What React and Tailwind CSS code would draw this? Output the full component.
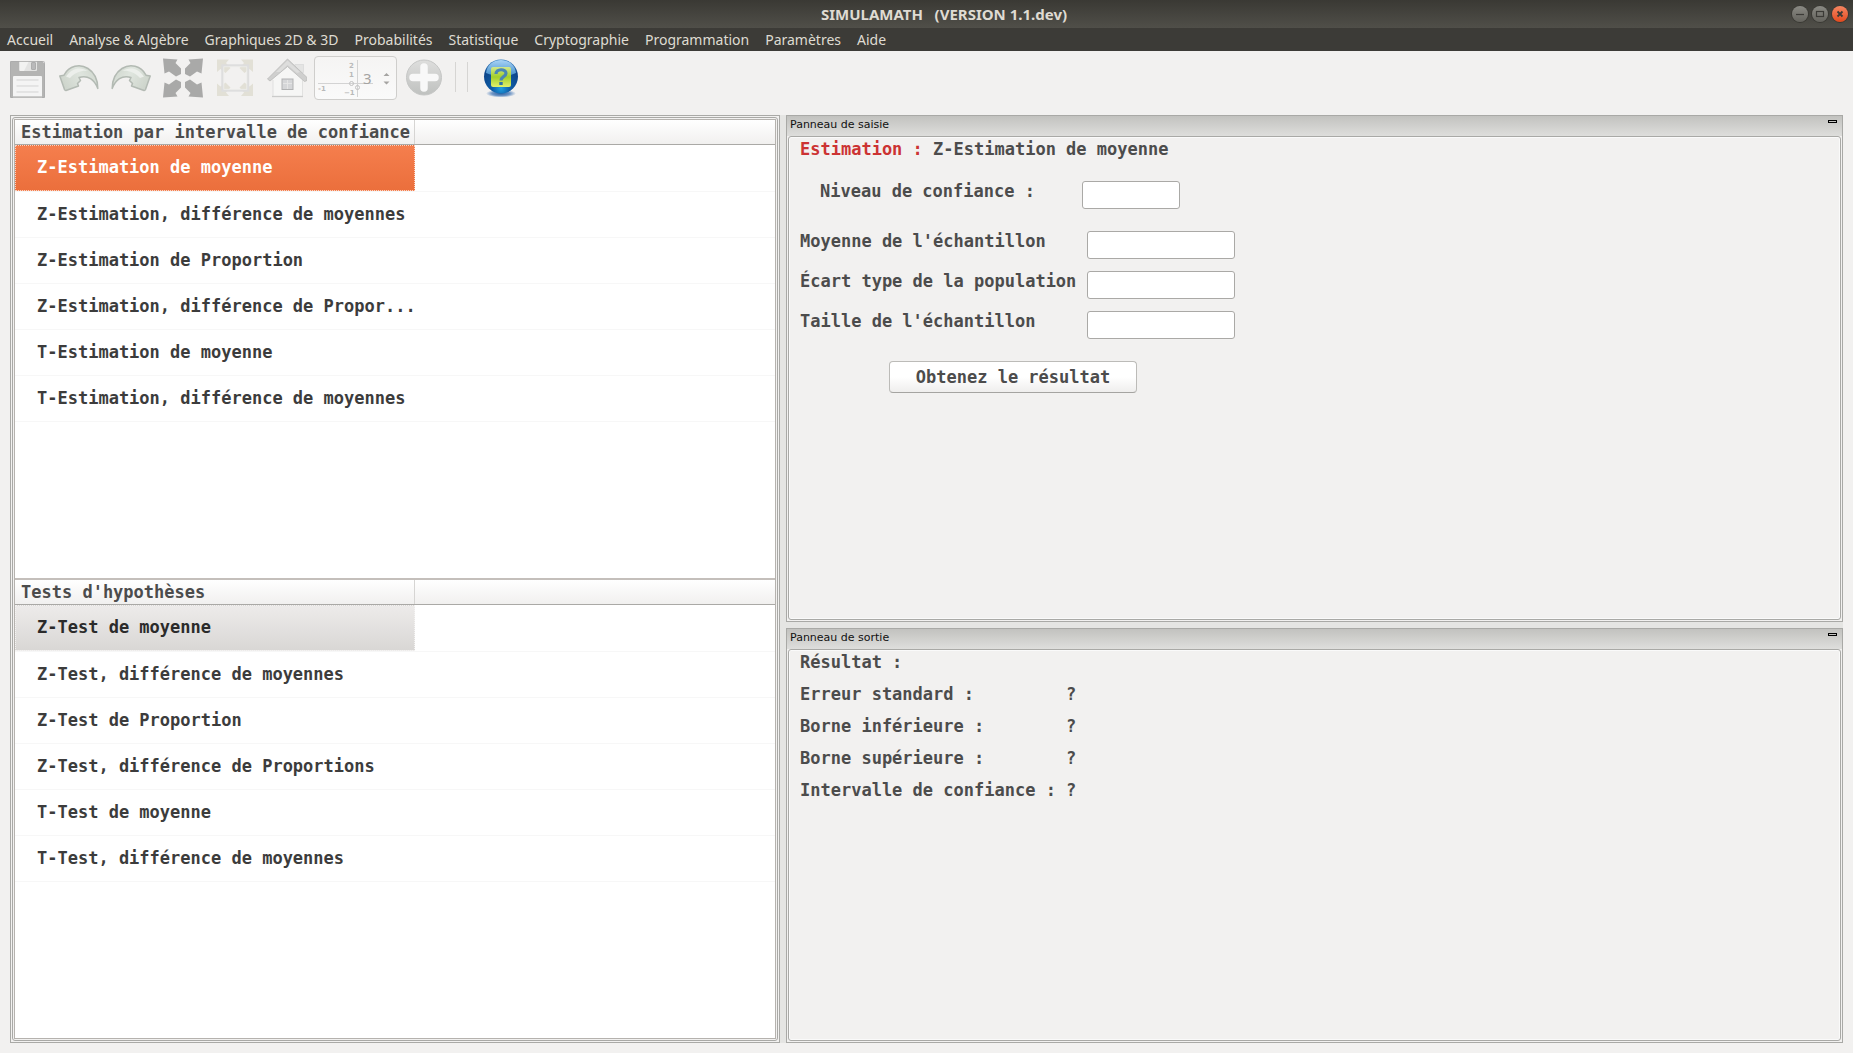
import { useState } from "react";

const menuItems = [
  "Accueil",
  "Analyse & Algèbre",
  "Graphiques 2D & 3D",
  "Probabilités",
  "Statistique",
  "Cryptographie",
  "Programmation",
  "Paramètres",
  "Aide",
];

const estimations = [
  "Z-Estimation de moyenne",
  "Z-Estimation, différence de moyennes",
  "Z-Estimation de Proportion",
  "Z-Estimation, différence de Propor...",
  "T-Estimation de moyenne",
  "T-Estimation, différence de moyennes",
];

const tests = [
  "Z-Test de moyenne",
  "Z-Test, différence de moyennes",
  "Z-Test de Proportion",
  "Z-Test, différence de Proportions",
  "T-Test de moyenne",
  "T-Test, différence de moyennes",
];

const sampleFields = [
  { id: "moyenne", label: "Moyenne de l'échantillon" },
  { id: "ecart", label: "Écart type de la population" },
  { id: "taille", label: "Taille de l'échantillon" },
];

const outputs = ["Erreur standard :", "Borne inférieure :", "Borne supérieure :", "Intervalle de confiance :"];

function SaveIcon() {
  return (
    <svg viewBox="0 0 40 40" className="size-10">
      <path d="M3 4 Q3 3 4 3 H35 L38 6 V39 Q38 40 37 40 H4 Q3 40 3 39Z" fill="#b4b4b3" />
      <path d="M12 3 H30 V12 Q30 13 29 13 H13 Q12 13 12 12Z" fill="#e3e3e2" />
      <path d="M13 3 H22 L17 13 H13Z" fill="#f2f2f1" />
      <rect x="24.5" y="4.5" width="4" height="7" rx="0.5" fill="#b9b9ba" stroke="#a4a4a5" strokeWidth="0.8" />
      <path d="M6 19 Q6 18 7 18 H34 Q35 18 35 19 V38 H6Z" fill="#f4f4f4" />
      <path d="M9.5 22 H31.5 M9.5 28 H31.5 M9.5 34 H31.5" stroke="#d3d3d3" strokeWidth="1" />
      <rect x="3.5" y="3.5" width="34" height="36" rx="1" fill="none" stroke="#aaaaaa" strokeWidth="0.8" />
      <rect x="6" y="38" width="29" height="1.5" fill="#cbcbca" />
    </svg>
  );
}

function CurvedArrowIcon({ gradientId }) {
  return (
    <svg viewBox="0 0 40 40" className="size-10">
      <defs>
        <linearGradient id={gradientId} x1="0" x2="1" y1="0.6" y2="0.2">
          <stop offset="0" stopColor="#cdd4cb" />
          <stop offset="0.55" stopColor="#dfe5de" />
          <stop offset="1" stopColor="#cfd6cd" />
        </linearGradient>
      </defs>
      <path
        d="M0.8 18 L5 17.2 C10 7.5 21 5.5 29 10.5 C36 15 38.8 22 38.8 30.5 C35.5 22 29 16.5 20 19.5 L21.5 22.5 L18.5 25.5 L19.5 28 L7 32.5 Q6 32.7 5.5 31.5 Z"
        fill={`url(#${gradientId})`}
        stroke="#b3bab3"
        strokeWidth="1.5"
        strokeLinejoin="round"
      />
      <path d="M7 18.5 C13 9.5 22 8.5 29 13 C24 12 16 14 11 20Z" fill="#ecefeb" />
    </svg>
  );
}

function ExpandIcon() {
  return (
    <svg viewBox="0 0 40 40" className="size-10" fill="#a9a9a8">
      <path d="M0 0.5 L14.5 1.5 L12.5 5 L18 10.5 L18 16 L13 18.5 L6 13.5 L1.5 15.5 Z" />
      <path d="M40 0.5 L25.5 1.5 L27.5 5 L22 10.5 L22 16 L27 18.5 L34 13.5 L38.5 15.5 Z" />
      <path d="M0 39.5 L14.5 38.5 L12.5 35 L18 29.5 L18 24 L13 21.5 L6 26.5 L1.5 24.5 Z" />
      <path d="M40 39.5 L25.5 38.5 L27.5 35 L22 29.5 L22 24 L27 21.5 L34 26.5 L38.5 24.5 Z" />
    </svg>
  );
}

function FitIcon() {
  return (
    <svg viewBox="0 0 40 40" className="size-10">
      <g fill="#e2e0d6">
        <path d="M2 1.5 H14 L11 5 L15.5 10 L10.5 15 L5.5 11 L2 14Z" />
        <path d="M38 1.5 H26 L29 5 L24.5 10 L29.5 15 L34.5 11 L38 14Z" />
        <path d="M2 38 H14 L11 34.5 L15.5 29.5 L10.5 24.5 L5.5 28.5 L2 25.5Z" />
        <path d="M38 38 H26 L29 34.5 L24.5 29.5 L29.5 24.5 L34.5 28.5 L38 25.5Z" />
      </g>
      <rect x="7.5" y="7.5" width="25.5" height="25" fill="none" stroke="#dedede" strokeWidth="2.4" />
      <rect x="8.8" y="8.8" width="23" height="22.5" fill="none" stroke="#eeeeec" strokeWidth="0.8" />
    </svg>
  );
}

function HomeIcon() {
  return (
    <svg viewBox="0 0 40 40" className="size-10">
      <rect x="28" y="6.5" width="8.5" height="8" fill="#e4e4e3" stroke="#dadada" strokeWidth="0.8" />
      <path d="M6 21 L20.5 6 L35.5 21 V38 H6Z" fill="#f6f6f5" />
      <path d="M5 38.5 H36" stroke="#cbcbca" strokeWidth="1.3" />
      <path d="M6 22 V38 M35.5 22 V38" stroke="#dcdcdb" strokeWidth="0.8" />
      <path
        d="M20.5 1 L0.5 21 L3 23 L20.5 8.5 L37.5 23.5 L40 22.5 V19.5 Z"
        fill="#cfcfce"
        stroke="#bdbdbc"
        strokeWidth="0.9"
        strokeLinejoin="round"
      />
      <path d="M20.5 2.5 L9 14 L13 14 L20.5 7 L30 15 L33 14Z" fill="#dddddc" />
      <rect x="15" y="21" width="11" height="10.5" fill="#d5d6d8" stroke="#b1b2b3" strokeWidth="1" />
      <path d="M20.5 22 V31 M16 25.5 H25" stroke="#e6e6e6" strokeWidth="0.9" />
    </svg>
  );
}

function AxesIcon() {
  return (
    <svg
      viewBox="0 0 56 38"
      className="h-[38px] w-14 shrink-0"
      fontFamily="DejaVu Sans, sans-serif"
      fontSize="7"
      fill="#b9b9b9"
    >
      <path d="M1 24.5 H56 M40.5 1 V38" stroke="#d3d3d3" strokeWidth="1" />
      <circle cx="34.5" cy="24.5" r="2" fill="none" stroke="#c2c2c2" />
      <circle cx="40.5" cy="28.5" r="2" fill="none" stroke="#c2c2c2" />
      <text x="32" y="9">2</text>
      <text x="32" y="18">1</text>
      <text x="1" y="32">-1</text>
      <text x="27" y="36">−1</text>
    </svg>
  );
}

function PlusIcon() {
  return (
    <svg viewBox="0 0 40 40" className="size-10">
      <defs>
        <linearGradient id="plusFill" x1="0" x2="0" y1="0" y2="1">
          <stop offset="0" stopColor="#dededd" />
          <stop offset="1" stopColor="#bfc1bf" />
        </linearGradient>
      </defs>
      <circle cx="20" cy="19.5" r="17.5" fill="url(#plusFill)" stroke="#c6c7c6" strokeWidth="1" />
      <path d="M20 9 V30 M9 19.5 H31" stroke="#f8f8f8" strokeWidth="7.5" strokeLinecap="round" />
    </svg>
  );
}

function HelpIcon() {
  return (
    <svg viewBox="0 0 40 40" className="size-10">
      <defs>
        <radialGradient id="helpBall" cx="0.5" cy="0.85" r="0.85">
          <stop offset="0" stopColor="#1f9fe0" />
          <stop offset="0.3" stopColor="#0f5ea8" />
          <stop offset="0.75" stopColor="#0d4488" />
          <stop offset="1" stopColor="#2f7cc0" />
        </radialGradient>
        <linearGradient id="helpShine" x1="0" x2="0" y1="0" y2="1">
          <stop offset="0" stopColor="#a9d3f5" />
          <stop offset="1" stopColor="#3f8ccb" />
        </linearGradient>
        <radialGradient id="helpShadow">
          <stop offset="0" stopColor="#2d5f9e" />
          <stop offset="0.6" stopColor="#6f96c6" />
          <stop offset="1" stopColor="#f2f1f0" />
        </radialGradient>
        <linearGradient id="helpCard" x1="0" x2="0" y1="0" y2="1">
          <stop offset="0" stopColor="#d3e78d" />
          <stop offset="0.5" stopColor="#a2cf2a" />
          <stop offset="1" stopColor="#e2f16c" />
        </linearGradient>
      </defs>
      <ellipse cx="20" cy="35.5" rx="15" ry="4" fill="url(#helpShadow)" />
      <circle cx="20" cy="18.5" r="17" fill="url(#helpBall)" />
      <path d="M5 15 C6 6 13 2 20 2 C27 2 34 6 35 15 C26 19 14 19 5 15Z" fill="url(#helpShine)" />
      <rect x="10" y="9" width="20" height="20" rx="2" fill="url(#helpCard)" />
      <path
        d="M15 16 C15 10.5 25 10.5 25 15.2 C25 18.6 20 18.5 20 22.5"
        fill="none"
        stroke="#4a86b4"
        strokeWidth="3.2"
      />
      <rect x="18.3" y="24" width="3.4" height="3" fill="#2f74a8" />
    </svg>
  );
}

function WindowButton({ label, close, children }) {
  return (
    <button
      aria-label={label}
      className={
        close
          ? "size-4 rounded-full bg-linear-to-b from-[#f58560] to-[#e2481a] ring-1 ring-[#3a3934]"
          : "size-4 rounded-full bg-linear-to-b from-[#8b8a84] to-[#64635d] ring-1 ring-[#3a3934]"
      }
    >
      <svg viewBox="0 0 16 16" className="size-4" fill="none" stroke="#3b3a36" strokeWidth="1.2">
        {children}
      </svg>
    </button>
  );
}

function ToolButton({ label, children }) {
  return (
    <button aria-label={label} className="flex w-[52px] justify-center">
      {children}
    </button>
  );
}

function TreeList({ title, items, active }) {
  const [selected, setSelected] = useState(0);
  const fill = active
    ? "border-[#fbd3c2] bg-linear-to-b from-[#f57e4d] to-[#eb6f3c] text-white"
    : "border-[#f4f3f2] bg-linear-to-b from-[#edebea] to-[#d9d7d5] text-[#2b2b2b]";
  return (
    <section className="min-h-0 flex-1 overflow-hidden bg-white">
      <div className="flex h-[25px] items-center border-b border-[#aaa9a6] bg-linear-to-b from-white to-[#f1f0ef]">
        <h2 className="flex h-full w-[400px] items-center border-r border-[#d6d5d3] pl-1.5 whitespace-pre">{title}</h2>
      </div>
      <ul className="text-[#3c3c3c]">
        {items.map((item, i) => (
          <li key={item} className="flex h-[46px] border-b border-[#f7f7f7] first:h-[47px]">
            <button
              onClick={() => setSelected(i)}
              className={`w-[400px] border border-dotted pb-0.5 pl-[21px] text-left whitespace-pre ${i === selected ? fill : "border-transparent"}`}
            >
              {item}
            </button>
          </li>
        ))}
      </ul>
    </section>
  );
}

function Dock({ title, className, children }) {
  return (
    <section className={`flex min-h-0 flex-col border border-[#a9a9a6] bg-[#f2f1f0] ${className}`}>
      <header className="flex h-5 shrink-0 items-start justify-between bg-linear-to-b from-[#c2c2bf] to-[#dededc] pr-[5px] pl-[3px]">
        <h2 className="font-['DejaVu_Sans',sans-serif] text-[11px] leading-[17px] font-normal text-[#111]">{title}</h2>
        <button aria-label={`Réduire ${title}`} className="mt-1 h-[3px] w-[9px] border border-black bg-[#c4c4c1]" />
      </header>
      <div className="mx-px mb-px min-h-0 flex-1 rounded-[3px] border border-[#a9a9a6] pl-[11px] ring-1 ring-[#fafafa] ring-inset">
        {children}
      </div>
    </section>
  );
}

const inputClass =
  "h-7 rounded-[3px] border border-[#aaa9a6] bg-white px-1.5 outline-none focus:border-[#f07746]";

export default function App() {
  return (
    <div className="flex h-screen flex-col bg-[#f2f1f0] font-['DejaVu_Sans_Mono',monospace] text-[17px] leading-6 font-bold text-[#4c4c4c]">
      <header className="grid h-7 shrink-0 grid-cols-[1fr_auto_1fr] items-center bg-linear-to-b from-[#3a3934] to-[#504f49] pr-[5px] pl-10 font-['Noto_Sans',sans-serif] text-[#dfdbd2]">
        <h1 className="col-start-2 text-[15px] whitespace-pre">SIMULAMATH   (VERSION 1.1.dev)</h1>
        <div className="flex justify-end gap-1">
          <WindowButton label="Réduire">
            <path d="M4 8.5 H12" />
          </WindowButton>
          <WindowButton label="Agrandir">
            <rect x="4.5" y="5.5" width="7" height="5" />
          </WindowButton>
          <WindowButton label="Fermer" close>
            <path d="M5.5 5.5 L10.5 10.5 M10.5 5.5 L5.5 10.5" strokeWidth="1.8" />
          </WindowButton>
        </div>
      </header>

      <nav className="flex h-[23px] shrink-0 items-center gap-4 bg-[#3c3b37] pl-[7px] font-['Noto_Sans',sans-serif] text-[14px] font-normal text-[#dfdbd2]">
        {menuItems.map((m) => (
          <button key={m} className="whitespace-nowrap">
            {m}
          </button>
        ))}
      </nav>

      <div className="flex h-16 shrink-0 items-start pt-[7px] pl-px">
        <ToolButton label="Enregistrer">
          <SaveIcon />
        </ToolButton>
        <ToolButton label="Annuler">
          <CurvedArrowIcon gradientId="undoFill" />
        </ToolButton>
        <ToolButton label="Rétablir">
          <span className="-scale-x-100">
            <CurvedArrowIcon gradientId="redoFill" />
          </span>
        </ToolButton>
        <ToolButton label="Plein écran">
          <ExpandIcon />
        </ToolButton>
        <ToolButton label="Ajuster">
          <FitIcon />
        </ToolButton>
        <ToolButton label="Accueil">
          <HomeIcon />
        </ToolButton>
        <div className="-mt-0.5 ml-px flex h-11 w-[83px] items-center rounded-[4px] border border-[#cfcecc] bg-linear-to-b from-[#f5f4f3] to-[#fafafa] pl-0.5">
          <AxesIcon />
          <input
            aria-label="Précision"
            defaultValue="3"
            disabled
            className="-ml-2.5 w-4 bg-transparent font-['Noto_Sans',sans-serif] text-[15px] font-normal text-[#a5a4a2]"
          />
          <svg viewBox="0 0 7 13" className="ml-1 h-[13px] w-[7px]" fill="#a5a4a2">
            <path d="M0.5 4 L3.5 1 L6.5 4Z M0.5 9.5 L3.5 12.5 L6.5 9.5Z" />
          </svg>
        </div>
        <button aria-label="Ajouter" className="ml-[7px]">
          <PlusIcon />
        </button>
        <div className="mt-1 ml-[11px] h-[30px] w-[13px] border-x border-[#d6d5d3]" />
        <button aria-label="Aide" className="ml-[13px]">
          <HelpIcon />
        </button>
      </div>

      <main className="mx-2.5 mb-2.5 grid min-h-0 flex-1 grid-cols-[770fr_1057fr] gap-1.5 bg-[#e5e5e3]">
        <div className="flex min-h-0 flex-col border border-[#a9a9a6] bg-[#f2f1f0] p-px">
          <div className="flex min-h-0 flex-1 flex-col rounded-[3px] border border-[#a9a9a6] bg-[#f2f1f0] p-px">
            <div className="flex min-h-0 flex-1 flex-col gap-0.5 border border-[#b5b2ae] bg-[#c4bfbb]">
              <TreeList title="Estimation par intervalle de confiance" items={estimations} active />
              <TreeList title="Tests d'hypothèses" items={tests} />
            </div>
          </div>
        </div>

        <div className="flex min-h-0 flex-col gap-1.5">
          <Dock title="Panneau de saisie" className="flex-[507_1_0%]">
            <h3>
              <span className="text-[#cc3333]">Estimation :</span> Z-Estimation de moyenne
            </h3>
            <form onSubmit={(e) => e.preventDefault()}>
              <div className="mt-5 flex items-start pl-5">
                <label htmlFor="niveau" className="w-[262px] leading-5 whitespace-pre">
                  Niveau de confiance :
                </label>
                <input id="niveau" className={`w-[98px] ${inputClass}`} />
              </div>
              <div className="mt-[22px] flex flex-col gap-3">
                {sampleFields.map((f) => (
                  <div key={f.id} className="flex items-start">
                    <label htmlFor={f.id} className="w-[287px] leading-5 whitespace-pre">
                      {f.label}
                    </label>
                    <input id={f.id} className={`w-[148px] ${inputClass}`} />
                  </div>
                ))}
              </div>
              <button className="mt-[22px] ml-[89px] h-8 w-[248px] rounded-[4px] border border-[#bcbbb8] border-b-[#a5a4a1] bg-linear-to-b from-white from-50% to-[#efeeed] whitespace-pre">
                Obtenez le résultat
              </button>
            </form>
          </Dock>

          <Dock title="Panneau de sortie" className="flex-[415_1_0%]">
            <h3>Résultat :</h3>
            <dl className="mt-2 grid grid-cols-[266px_1fr] gap-y-2">
              {outputs.map((o) => (
                <div key={o} className="contents">
                  <dt className="whitespace-pre">{o}</dt>
                  <dd>?</dd>
                </div>
              ))}
            </dl>
          </Dock>
        </div>
      </main>
    </div>
  );
}
